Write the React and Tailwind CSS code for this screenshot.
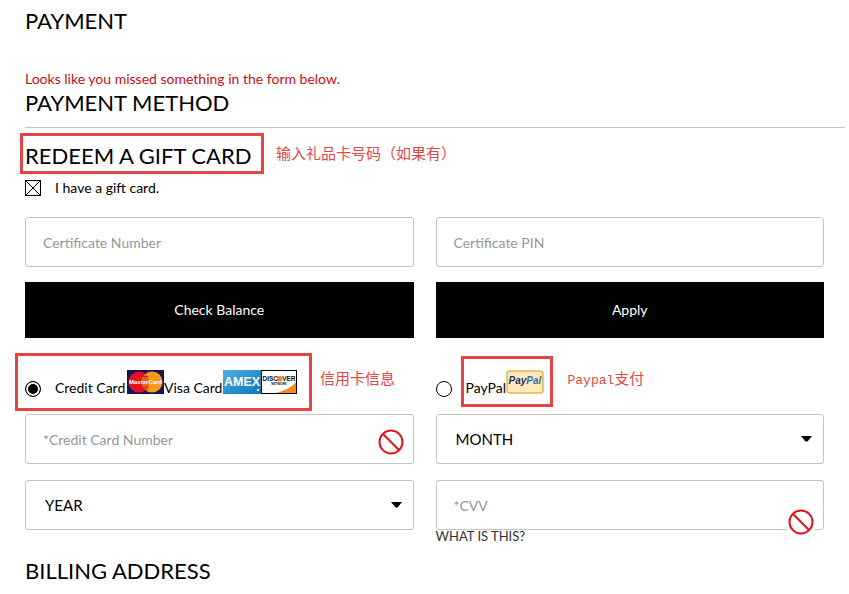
import React, { useState } from 'react';

const months = ['MONTH', '01', '02', '03', '04', '05', '06', '07', '08', '09', '10', '11', '12'];
const years = ['YEAR', '2016', '2017', '2018', '2019', '2020', '2021', '2022'];

const fieldClass = 'block w-full h-[50px] rounded-[3px] border border-[#c4c4c4] bg-white text-black outline-none';
const inputClass = `${fieldClass} px-[17px] text-sm placeholder:text-[#979797]`;
const buttonClass = 'h-14 bg-black text-sm text-white';
const radioClass =
  'size-4 shrink-0 appearance-none rounded-full border border-black bg-white checked:bg-black checked:shadow-[inset_0_0_0_2px_white]';

const Heading = ({ children, className = '' }) => (
  <h2 className={`text-[22px] leading-7 ${className}`}>{children}</h2>
);

const Note = ({ children, className = '' }) => (
  <span className={`text-[15px] leading-5 whitespace-nowrap text-[#e2484a] ${className}`}>{children}</span>
);

const SelectField = ({ id, label, options }) => (
  <div className="relative">
    <select id={id} aria-label={label} className={`${fieldClass} appearance-none px-[19px] text-[15px]`}>
      {options.map(o => (
        <option key={o}>{o}</option>
      ))}
    </select>
    <svg className="pointer-events-none absolute top-[22px] right-3 h-[6px] w-[11px]" viewBox="0 0 11 6">
      <path d="M0 0h11L6.5 5.5h-2z" fill="#000" />
    </svg>
  </div>
);

const ErrorIcon = ({ className }) => (
  <svg className={`pointer-events-none absolute size-7 bg-white ${className}`} viewBox="0 0 28 28" fill="none" stroke="#e0121a" strokeWidth="2">
    <circle cx="14" cy="14" r="11.5" />
    <path d="M6 6l16 16" />
  </svg>
);

const MasterCardLogo = () => (
  <svg className="h-6 w-[37px] shrink-0" viewBox="0 0 37 24">
    <rect width="37" height="24" fill="#14145f" />
    <circle cx="12" cy="12" r="10.5" fill="#e3131d" />
    <circle cx="25" cy="12" r="10.5" fill="#f59a13" />
    <path d="M18.5 3.8a10.5 10.5 0 0 1 0 16.4a10.5 10.5 0 0 1 0-16.4z" fill="#e8641a" />
    <path d="M16 6.5h5M15.4 17h6M17 19h4" stroke="#e3131d" strokeWidth="1" />
    <text x="18.5" y="14" textAnchor="middle" fontFamily="Liberation Sans, sans-serif" fontSize="6" fontWeight="700" fill="#fff">
      MasterCard
    </text>
  </svg>
);

const AmexLogo = () => (
  <svg className="h-6 w-[38px] shrink-0" viewBox="0 0 38 24">
    <defs>
      <linearGradient id="amex" x1="0" y1="0" x2="1" y2="1">
        <stop offset="0" stopColor="#4fb0e2" />
        <stop offset="1" stopColor="#0b76b8" />
      </linearGradient>
    </defs>
    <rect width="38" height="24" fill="url(#amex)" />
    <text x="19" y="15.5" textAnchor="middle" fontFamily="Liberation Sans, sans-serif" fontSize="12.5" fontWeight="700" fill="#fff">
      AMEX
    </text>
    <rect x="34" y="19" width="2" height="2" fill="#fff" />
  </svg>
);

const DiscoverLogo = () => (
  <svg className="h-6 w-9 shrink-0" viewBox="0 0 36 24">
    <rect x="0.5" y="0.5" width="35" height="23" fill="#fff" stroke="#000" />
    <path d="M35 12v11H14C23 21 31 17 35 12z" fill="#f08a24" />
    <circle cx="18.7" cy="8.7" r="2.7" fill="#f08a24" />
    <g fontFamily="Liberation Sans, sans-serif" fontWeight="700" fill="#111">
      <text x="1.5" y="11" fontSize="6.5">DISC</text>
      <text x="34.5" y="11" textAnchor="end" fontSize="6.5">VER</text>
      <text x="18" y="15" textAnchor="middle" fontSize="3">NETWORK</text>
    </g>
  </svg>
);

const PayPalLogo = () => (
  <svg className="h-6 w-[38px] shrink-0" viewBox="0 0 38 24">
    <rect x="1" y="1" width="36" height="22" rx="3" fill="#fdebbd" stroke="#e9b44c" strokeWidth="1.5" />
    <text x="2.5" y="14" fontFamily="Liberation Sans, sans-serif" fontSize="10" fontWeight="700" fontStyle="italic" fill="#1c3668">
      Pay<tspan fill="#2f6fa5">Pal</tspan>
    </text>
  </svg>
);

const App = () => {
  const [hasGiftCard, setHasGiftCard] = useState(true);
  const [method, setMethod] = useState('card');

  return (
    <main className="bg-white pt-[7px] pr-1 pb-2 pl-[25px] font-[Lato,'Noto_Sans_CJK_SC',sans-serif] text-sm leading-5 text-black">
      <Heading>PAYMENT</Heading>

      <p className="mt-[34px] text-[#c20f1c]">Looks like you missed something in the form below.</p>
      <Heading className="border-b border-[#c4c4c4] pb-[10px]">PAYMENT METHOD</Heading>

      <div className="mt-[5px] flex gap-3">
        <div className="-ml-[5px] flex h-[41px] w-[244px] items-center border-3 border-[#e64345] pt-1 pl-[2px]">
          <Heading className="whitespace-nowrap">REDEEM A GIFT CARD</Heading>
        </div>
        <Note className="mt-[10px]">输入礼品卡号码（如果有）</Note>
      </div>

      <form className="pr-[21px]" onSubmit={e => e.preventDefault()}>
        <label className="mt-1 flex items-center">
          <span className="mr-[14px] grid size-4">
            <input
              type="checkbox"
              checked={hasGiftCard}
              onChange={e => setHasGiftCard(e.target.checked)}
              className="peer col-start-1 row-start-1 size-4 appearance-none border border-black"
            />
            <svg className="pointer-events-none invisible col-start-1 row-start-1 size-4 peer-checked:visible" viewBox="0 0 16 16" stroke="#000">
              <path d="M1 1l14 14M15 1L1 15" />
            </svg>
          </span>
          I have a gift card.
        </label>

        <div className="mt-[19px] grid grid-cols-2 gap-x-[22px] gap-y-[15px]">
          <input type="text" aria-label="Certificate Number" placeholder="Certificate Number" className={inputClass} />
          <input type="text" aria-label="Certificate PIN" placeholder="Certificate PIN" className={inputClass} />
          <button type="button" className={buttonClass}>Check Balance</button>
          <button type="button" className={buttonClass}>Apply</button>
        </div>

        <div className="mt-[15px] grid grid-cols-2 gap-x-[22px]">
          <div className="flex gap-2">
            <label className="-ml-[10px] flex h-[58px] w-[297px] shrink-0 items-start border-3 border-[#e64345] pt-[14px] pl-[7px]">
              <input
                type="radio"
                name="method"
                checked={method === 'card'}
                onChange={() => setMethod('card')}
                className={`${radioClass} mt-[11px] mr-[14px]`}
              />
              <span className="flex items-end whitespace-nowrap">
                <span className="w-[72px] leading-3">Credit Card</span>
                <MasterCardLogo />
                <span className="w-[59px] leading-3">Visa Card</span>
                <AmexLogo />
                <DiscoverLogo />
              </span>
            </label>
            <Note className="mt-[15px]">信用卡信息</Note>
          </div>

          <div className="flex items-start pt-[3px]">
            <input
              id="paypal"
              type="radio"
              name="method"
              checked={method === 'paypal'}
              onChange={() => setMethod('paypal')}
              className={`${radioClass} mt-[25px] mr-[9px]`}
            />
            <label htmlFor="paypal" className="flex h-[51px] w-[92px] items-start border-3 border-[#e64345] pt-[11px] pl-[2px]">
              <span className="flex items-end">
                <span className="w-10 leading-3">PayPal</span>
                <PayPalLogo />
              </span>
            </label>
            <Note className="mt-3 ml-[15px]">
              <span className="font-['Liberation_Mono',monospace] text-[13px]">Paypal</span>支付
            </Note>
          </div>
        </div>

        <div className="mt-[3px] grid grid-cols-2 gap-x-[22px] gap-y-4">
          <div className="relative">
            <input type="text" aria-label="Credit Card Number" placeholder="*Credit Card Number" className={inputClass} />
            <ErrorIcon className="top-[14px] right-[9px]" />
          </div>
          <SelectField id="month" label="Month" options={months} />
          <SelectField id="year" label="Year" options={years} />
          <div className="relative">
            <input type="text" aria-label="CVV" placeholder="*CVV" className={inputClass} />
            <ErrorIcon className="top-7 right-[9px]" />
            <a href="#cvv" className="block w-fit text-[13px] leading-3 text-[#333]">WHAT IS THIS?</a>
          </div>
        </div>
      </form>

      <Heading className="mt-[15px]">BILLING ADDRESS</Heading>
    </main>
  );
};

export default App;
